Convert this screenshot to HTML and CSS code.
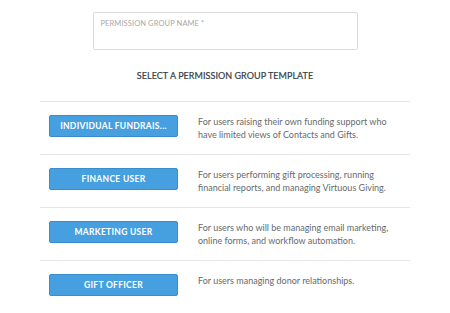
FILE: index.html
```html
<!DOCTYPE html>
<html>
<head>
<meta charset="utf-8">
<link rel="stylesheet" href="styles.css">
</head>
<body>
<div class="page">
  <div class="field">
    <label class="field-label">PERMISSION GROUP NAME *</label>
  </div>
  <h2 class="title">SELECT A PERMISSION GROUP TEMPLATE</h2>
  <div class="list">
    <div class="row">
      <button class="btn">INDIVIDUAL FUNDRAIS...</button>
      <p class="desc">For users raising their own funding support who have limited views of Contacts and Gifts.</p>
    </div>
    <div class="row">
      <button class="btn">FINANCE USER</button>
      <p class="desc">For users performing gift processing, running financial reports, and managing Virtuous Giving.</p>
    </div>
    <div class="row">
      <button class="btn">MARKETING USER</button>
      <p class="desc">For users who will be managing email marketing, online forms, and workflow automation.</p>
    </div>
    <div class="row">
      <button class="btn">GIFT OFFICER</button>
      <p class="desc">For users managing donor relationships.</p>
    </div>
  </div>
</div>
</body>
</html>
```
FILE: styles.css
```css
html, body {
  margin: 0;
  padding: 0;
  background: #ffffff;
}
body {
  font-family: Lato, "Open Sans", sans-serif;
  width: 450px;
  height: 313px;
  overflow: hidden;
}
.page {
  display: flex;
  flex-direction: column;
  align-items: center;
  padding-top: 12px;
}
.field {
  box-sizing: border-box;
  width: 265px;
  height: 38px;
  border: 1px solid #dcdcdc;
  border-radius: 2px;
  padding: 6px 0 0 7px;
}
.field-label {
  display: block;
  font-size: 7.5px;
  line-height: 9px;
  color: #a8a8a8;
  letter-spacing: 0.1px;
}
.title {
  margin: 20px 0 0 0;
  font-size: 9px;
  line-height: 12px;
  font-weight: 400;
  color: #333d48;
  letter-spacing: 0.05px;
  -webkit-text-stroke: 0.2px #333d48;
}
.list {
  width: 370px;
  margin-top: 19px;
}
.row {
  display: flex;
  align-items: flex-start;
  gap: 20px;
  border-top: 1px solid #e6e6e6;
  height: 53px;
  padding: 13px 0 0 9px;
  box-sizing: border-box;
}
.btn {
  flex: none;
  box-sizing: border-box;
  width: 129px;
  height: 22px;
  background: #46a0df;
  border: 1px solid #3a8ccd;
  border-radius: 2px;
  color: #ffffff;
  font-family: Lato, sans-serif;
  font-weight: 700;
  font-size: 8.5px;
  letter-spacing: 0.3px;
  padding: 0;
  margin: 0;
}
.desc {
  margin: 0;
  font-size: 9px;
  line-height: 13px;
  color: #666a6e;
  width: 200px;
}
```
